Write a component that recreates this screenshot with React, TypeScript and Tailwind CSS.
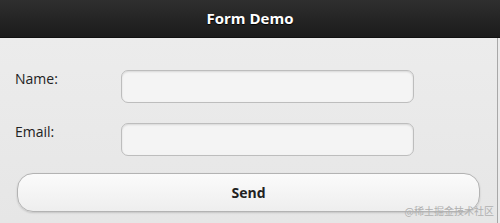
import React from 'react'

const App = () => {
  return (
    <div className="h-[223px] w-[500px] overflow-hidden bg-[#ebebeb] font-['Open_Sans','Noto_Sans',sans-serif]">
      {/* Header */}
      <header className="flex h-[38px] items-center justify-center border-b border-[#111] bg-gradient-to-b from-[#2f2f2f] to-[#1b1b1b]">
        <h1 className="text-[15px] font-bold text-white [text-shadow:0_1px_1px_#000]">Form Demo</h1>
      </header>

      <div className="mr-[2px] flex h-[185px] flex-col border-r border-[#a8a8a8] bg-gradient-to-b from-[#ececec] to-[#e6e6e6]">
        {/* Fields */}
        <div className="flex flex-col gap-[20px] pt-[32px]">
          <div className="flex items-start">
            <label className="-mt-[2px] w-[121px] pl-[15px] text-[14px] text-[#222]">Name:</label>
            <input className="h-[33px] w-[293px] rounded-[7px] border border-[#bdbdbd] bg-[#f4f4f4] shadow-[inset_0_1px_2px_rgba(0,0,0,0.12)] outline-none" />
          </div>
          <div className="flex items-start">
            <label className="-mt-[2px] w-[121px] pl-[15px] text-[14px] text-[#222]">Email:</label>
            <input className="h-[33px] w-[293px] rounded-[7px] border border-[#bdbdbd] bg-[#f4f4f4] shadow-[inset_0_1px_2px_rgba(0,0,0,0.12)] outline-none" />
          </div>
        </div>

        {/* Send */}
        <div className="relative mt-[17px] pl-[17px]">
          <button className="h-[39px] w-[463px] rounded-[16px] border border-[#b3b3b3] bg-gradient-to-b from-[#fbfbfb] to-[#eeeeee] text-[14px] font-bold text-[#222] shadow-[0_1px_2px_rgba(0,0,0,0.15)]">
            Send
          </button>
          <span className="absolute right-[3px] top-[30px] text-[10px] text-[#b0b0b0] font-['Noto_Sans_CJK_SC',sans-serif]">@稀土掘金技术社区</span>
        </div>
      </div>
    </div>
  )
}

export default App
